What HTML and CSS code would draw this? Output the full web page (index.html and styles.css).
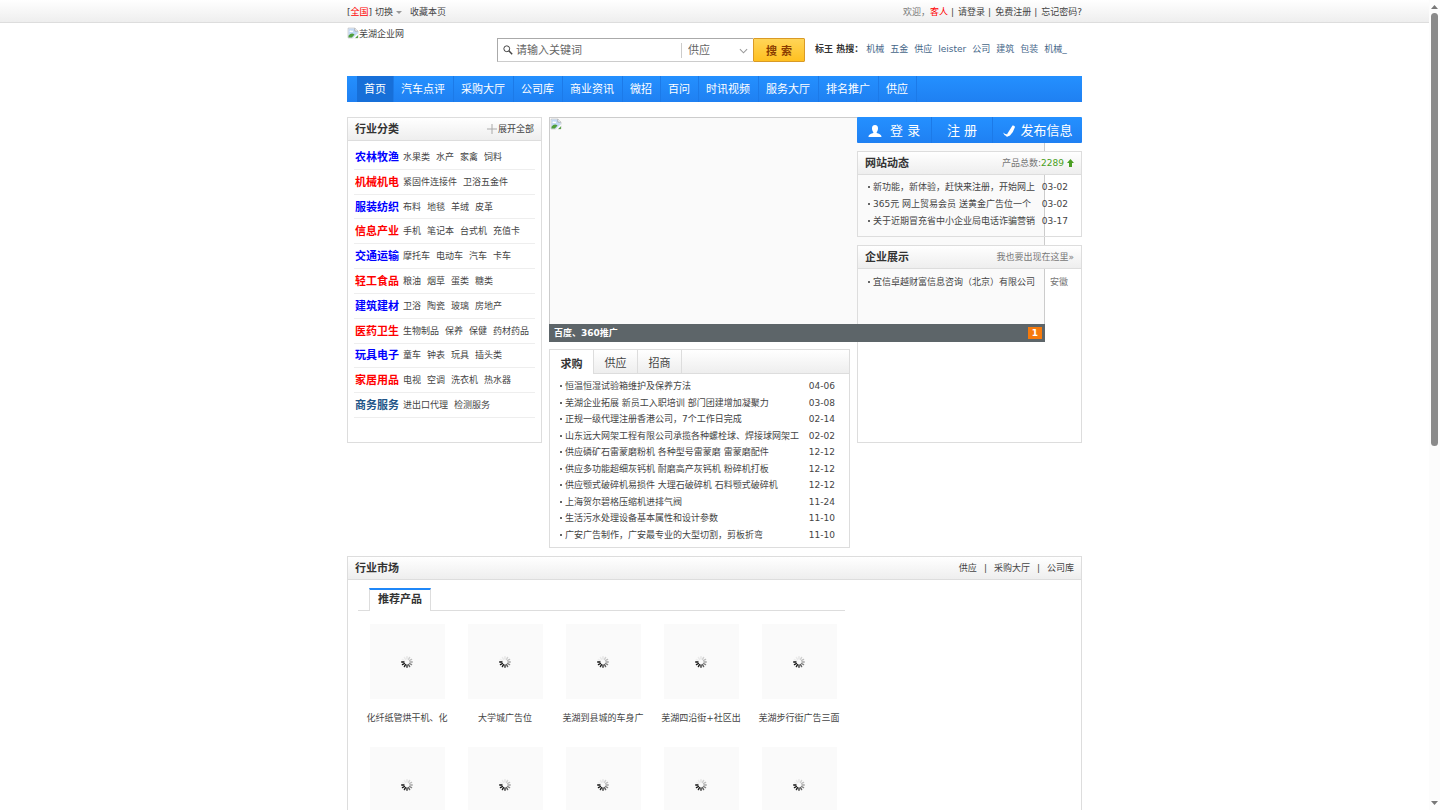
FILE: index.html
```html
<!DOCTYPE html>
<html lang="zh-CN">
<head>
<meta charset="utf-8">
<title>芜湖企业网</title>
<link rel="stylesheet" href="styles.css">
</head>
<body>
<svg class="sprites" aria-hidden="true">
  <symbol id="broken" viewBox="0 0 16 16">
    <path d="M1.500 1.500H10.500L14.500 5.500V14.500H1.500Z" fill="#fff" stroke="#b5b5b5"/>
    <path d="M2 2H10L14 6V9L9 14H2Z" fill="#c3d9f5"/>
    <path d="M3.500 6.500a1.500 1.500 0 0 1 2.500-1.500a1.500 1.500 0 0 1 2 1.500Z" fill="#fff"/>
    <path d="M2 14V11.500Q6 6.500 10 10L6.500 14Z" fill="#4f9e3a"/>
    <path d="M10.500 1.500V5.500H14.500" fill="#fff" stroke="#9a9a9a"/>
    <path d="M7 15.500L15.500 7.500V10L10 15.500Z" fill="#fff"/>
    <path d="M11 14.500H14.500V11Z" fill="#4f9e3a"/>
  </symbol>
  <symbol id="spinner" viewBox="-8 -8 16 16">
    <g stroke-width="1.900" stroke-linecap="round">
      <path d="M0-4V-7" stroke="#e4e4e4"/>
      <path d="M0-4V-7" stroke="#d2d2d2" transform="rotate(30)"/>
      <path d="M0-4V-7" stroke="#bcbcbc" transform="rotate(60)"/>
      <path d="M0-4V-7" stroke="#a4a4a4" transform="rotate(90)"/>
      <path d="M0-4V-7" stroke="#828282" transform="rotate(120)"/>
      <path d="M0-4V-7" stroke="#606060" transform="rotate(150)"/>
      <path d="M0-4V-7" stroke="#333" transform="rotate(180)"/>
      <path d="M0-4V-7" stroke="#222" transform="rotate(210)"/>
      <path d="M0-4V-7" stroke="#151515" transform="rotate(240)"/>
      <path d="M0-4V-7" stroke="#111" transform="rotate(270)"/>
      <path d="M0-4V-7" stroke="#eee" transform="rotate(300)"/>
      <path d="M0-4V-7" stroke="#eaeaea" transform="rotate(330)"/>
    </g>
  </symbol>
</svg>

<div class="page">
  <div class="topbar">
    <div class="wrap topbar-row">
      <div class="top-left">
        <span>[<a class="red" href="#">全国</a>]</span>
        <a href="#">切换</a>
        <i class="caret"></i>
        <a class="fav" href="#">收藏本页</a>
      </div>
      <div class="top-right">
        <span class="muted">欢迎，</span><span class="red">客人</span><i>|</i><a href="#">请登录</a><i>|</i><a href="#">免费注册</a><i>|</i><a href="#">忘记密码?</a>
      </div>
    </div>
  </div>

  <div class="wrap">
    <header class="header">
      <a class="logo" href="#"><svg class="broken"><use href="#broken"/></svg>芜湖企业网</a>
      <form class="search">
        <div class="search-box">
          <svg class="glass" viewBox="0 0 12 12"><circle cx="4.500" cy="4.500" r="3.500" fill="none" stroke="#444" stroke-width="1.200"/><path d="M7 7L11 11" stroke="#444" stroke-width="1.800"/></svg>
          <input class="search-input" type="text" placeholder="请输入关键词" aria-label="请输入关键词">
          <div class="search-type">
            <select aria-label="分类"><option>供应</option><option>公司</option></select>
            <svg class="chevron" viewBox="0 0 10 6"><path d="M1 1L5 5L9 1" fill="none" stroke="#999" stroke-width="1.200"/></svg>
          </div>
        </div>
        <button class="search-btn" type="button">搜 索</button>
      </form>
      <div class="hot"><b>标王 热搜：</b><a href="#">机械</a><a href="#">五金</a><a href="#">供应</a><a href="#">leister</a><a href="#">公司</a><a href="#">建筑</a><a href="#">包装</a><a href="#">机械_</a></div>
    </header>

    <nav class="nav">
      <a class="active" href="#">首页</a><a href="#">汽车点评</a><a href="#">采购大厅</a><a href="#">公司库</a><a href="#">商业资讯</a><a href="#">微招</a><a href="#">百问</a><a href="#">时讯视频</a><a href="#">服务大厅</a><a href="#">排名推广</a><a href="#">供应</a>
    </nav>

    <main class="columns">
      <section class="panel cats">
        <div class="panel-head"><h2>行业分类</h2><a class="expand" href="#"><svg viewBox="0 0 10 10"><path d="M5 0V10M0 5H10" stroke="#aaa"/></svg>展开全部</a></div>
        <ul class="cat-list">
          <li><a class="cat blue" href="#">农林牧渔</a><a href="#">水果类</a><a href="#">水产</a><a href="#">家禽</a><a href="#">饲料</a></li>
          <li><a class="cat red" href="#">机械机电</a><a href="#">紧固件连接件</a><a href="#">卫浴五金件</a></li>
          <li><a class="cat blue" href="#">服装纺织</a><a href="#">布料</a><a href="#">地毯</a><a href="#">羊绒</a><a href="#">皮革</a></li>
          <li><a class="cat red" href="#">信息产业</a><a href="#">手机</a><a href="#">笔记本</a><a href="#">台式机</a><a href="#">充值卡</a></li>
          <li><a class="cat blue" href="#">交通运输</a><a href="#">摩托车</a><a href="#">电动车</a><a href="#">汽车</a><a href="#">卡车</a></li>
          <li><a class="cat red" href="#">轻工食品</a><a href="#">粮油</a><a href="#">烟草</a><a href="#">蛋类</a><a href="#">糖类</a></li>
          <li><a class="cat blue" href="#">建筑建材</a><a href="#">卫浴</a><a href="#">陶瓷</a><a href="#">玻璃</a><a href="#">房地产</a></li>
          <li><a class="cat red" href="#">医药卫生</a><a href="#">生物制品</a><a href="#">保养</a><a href="#">保健</a><a href="#">药材药品</a></li>
          <li><a class="cat blue" href="#">玩具电子</a><a href="#">童车</a><a href="#">钟表</a><a href="#">玩具</a><a href="#">插头类</a></li>
          <li><a class="cat red" href="#">家居用品</a><a href="#">电视</a><a href="#">空调</a><a href="#">洗衣机</a><a href="#">热水器</a></li>
          <li><a class="cat navy" href="#">商务服务</a><a href="#">进出口代理</a><a href="#">检测服务</a></li>
        </ul>
      </section>

      <div class="middle">
        <div class="slider">
          <svg class="broken"><use href="#broken"/></svg>
          <div class="slider-bar"><b>百度、360推广</b><span class="page-no">1</span></div>
        </div>
        <section class="panel">
          <div class="tabs">
            <button class="tab on" type="button">求购</button><button class="tab" type="button">供应</button><button class="tab" type="button">招商</button>
          </div>
          <ul class="list trade">
            <li><a href="#">恒温恒湿试验箱维护及保养方法</a><span>04-06</span></li>
            <li><a href="#">芜湖企业拓展 新员工入职培训 部门团建增加凝聚力</a><span>03-08</span></li>
            <li><a href="#">正规一级代理注册香港公司，7个工作日完成</a><span>02-14</span></li>
            <li><a href="#">山东远大网架工程有限公司承揽各种螺栓球、焊接球网架工</a><span>02-02</span></li>
            <li><a href="#">供应磷矿石雷蒙磨粉机 各种型号雷蒙磨 雷蒙磨配件</a><span>12-12</span></li>
            <li><a href="#">供应多功能超细灰钙机 耐磨高产灰钙机 粉碎机打板</a><span>12-12</span></li>
            <li><a href="#">供应颚式破碎机易损件 大理石破碎机 石料颚式破碎机</a><span>12-12</span></li>
            <li><a href="#">上海贺尔碧格压缩机进排气阀</a><span>11-24</span></li>
            <li><a href="#">生活污水处理设备基本属性和设计参数</a><span>11-10</span></li>
            <li><a href="#">广安广告制作，广安最专业的大型切割，剪板折弯</a><span>11-10</span></li>
          </ul>
        </section>
      </div>

      <aside class="side">
        <div class="actions">
          <a class="act-login" href="#"><svg viewBox="0 0 14 12"><path d="M7 0C9.200 0 10 1.600 10 3.400C10 5 9.400 6.200 8.700 6.900V8C10.500 8.800 13.500 9 13.500 12H.5C.5 9 3.500 8.800 5.300 8V6.900C4.600 6.200 4 5 4 3.400C4 1.600 4.800 0 7 0Z" fill="#fff"/></svg>登 录</a>
          <a class="act-reg" href="#">注 册</a>
          <a class="act-post" href="#"><svg viewBox="0 0 14 12"><path d="M10.500 .5Q12.500 0 13 2Q11.500 7 8 10.500L4.500 12L5.500 8.500Z" fill="#fff"/><path d="M1 7.500Q2 10.500 5 11.500L6 9.500Q3 9.500 1 7.500Z" fill="#fff"/></svg>发布信息</a>
        </div>
        <section class="panel">
          <div class="panel-head"><h2>网站动态</h2><span class="count">产品总数:<b>2289</b><svg viewBox="0 0 7 8"><path d="M3.500 0L7 4H5V8H2V4H0Z" fill="#4a9f22"/></svg></span></div>
          <ul class="list news">
            <li><a href="#">新功能，新体验，赶快来注册，开始网上</a><span>03-02</span></li>
            <li><a href="#">365元 网上贸易会员 送黄金广告位一个</a><span>03-02</span></li>
            <li><a href="#">关于近期冒充省中小企业局电话诈骗营销</a><span>03-17</span></li>
          </ul>
        </section>
        <section class="panel show">
          <div class="panel-head"><h2>企业展示</h2><a class="muted" href="#">我也要出现在这里»</a></div>
          <ul class="list firms">
            <li><a href="#">宜信卓越财富信息咨询（北京）有限公司</a><span>安徽</span></li>
          </ul>
        </section>
      </aside>
    </main>

    <section class="panel market">
      <div class="panel-head"><h2>行业市场</h2><div class="links"><a href="#">供应</a><i>|</i><a href="#">采购大厅</a><i>|</i><a href="#">公司库</a></div></div>
      <div class="goods">
        <div class="goods-head"><h3>推荐产品</h3></div>
        <div class="grid">
          <a class="item" href="#"><span class="thumb"><svg><use href="#spinner"/></svg></span>化纤纸管烘干机、化</a>
          <a class="item" href="#"><span class="thumb"><svg><use href="#spinner"/></svg></span>大学城广告位</a>
          <a class="item" href="#"><span class="thumb"><svg><use href="#spinner"/></svg></span>芜湖到县城的车身广</a>
          <a class="item" href="#"><span class="thumb"><svg><use href="#spinner"/></svg></span>芜湖四沿街+社区出</a>
          <a class="item" href="#"><span class="thumb"><svg><use href="#spinner"/></svg></span>芜湖步行街广告三面</a>
          <a class="item" href="#"><span class="thumb"><svg><use href="#spinner"/></svg></span></a>
          <a class="item" href="#"><span class="thumb"><svg><use href="#spinner"/></svg></span></a>
          <a class="item" href="#"><span class="thumb"><svg><use href="#spinner"/></svg></span></a>
          <a class="item" href="#"><span class="thumb"><svg><use href="#spinner"/></svg></span></a>
          <a class="item" href="#"><span class="thumb"><svg><use href="#spinner"/></svg></span></a>
        </div>
      </div>
    </section>
  </div>
</div>

<div class="scrollbar" aria-hidden="true">
  <svg viewBox="0 0 7 4"><path d="M3.500 0L7 4H0Z" fill="#777"/></svg>
  <div class="track"><div class="thumb-bar"></div></div>
  <svg viewBox="0 0 7 4"><path d="M0 0H7L3.500 4Z" fill="#777"/></svg>
</div>
</body>
</html>
```

FILE: styles.css
```css
* { box-sizing: border-box; }
body {
  margin: 0;
  height: 100vh;
  overflow: hidden;
  display: flex;
  background: #fff;
  color: #444;
  font: 9px/16px "DejaVu Sans", "Noto Sans CJK SC", sans-serif;
}
a { color: inherit; text-decoration: none; }
ul { list-style: none; margin: 0; padding: 0; }
h2, h3 { margin: 0; padding-top: 2px; font-size: 11px; line-height: 16px; color: #333; }
i { font-style: normal; }
button, input, select { font-family: inherit; }
.sprites { position: absolute; width: 0; height: 0; }
.red { color: #f00; }
.blue { color: #00f; }
.navy { color: #225588; }
.muted { color: #777; }

.page { flex: 1; min-width: 0; height: 100vh; overflow: hidden; }
.wrap { max-width: 735px; margin: 0 auto; }

.topbar {
  border-bottom: 1px solid #ddd;
  background: linear-gradient(#fff, #eee);
}
.topbar-row { display: flex; justify-content: space-between; padding: 4px 0 2px; }
.top-left { display: flex; align-items: center; gap: 3px; }
.caret { border: 3px solid transparent; border-top-color: #999; border-bottom: 0; }
.fav { margin-left: 5px; }
.top-right i { margin: 0 4px 0 3px; }

.header { display: flex; align-items: flex-start; height: 53px; }
.logo { display: flex; width: 150px; padding-top: 3px; }
.broken { width: 12px; height: 12px; display: block; }
.logo .broken { margin-top: 1px; }
.search { display: flex; width: 308px; margin-top: 15px; }
.search-box {
  flex: 1;
  min-width: 0;
  height: 24px;
  display: flex;
  align-items: center;
  padding-left: 5px;
  border: 1px solid #aaa;
  border-right: 0;
  border-bottom-color: #ccc;
}
.glass { width: 10px; height: 10px; }
.search-input {
  flex: 1;
  min-width: 0;
  border: 0;
  outline: 0;
  padding: 1px 0 0 3px;
  font-size: 11px;
  color: #666;
}
.search-input::placeholder { color: #666; opacity: 1; }
.search-type { position: relative; width: 72px; border-left: 1px solid #ccc; }
.search-type select {
  appearance: none;
  display: block;
  width: 100%;
  padding: 1px 0 0 6px;
  border: 0;
  background: none;
  font-size: 11px;
  line-height: 14px;
  color: #666;
}
.chevron { position: absolute; right: 5px; top: 5px; width: 9px; height: 6px; pointer-events: none; }
.search-btn {
  width: 52px;
  height: 24px;
  padding: 0;
  border: 1px solid #d99a26;
  border-radius: 1px;
  background: linear-gradient(#ffd558, #ffc020);
  color: #8a3c00;
  font-size: 11px;
  font-weight: bold;
}
.hot { margin: 18px 0 0 10px; white-space: nowrap; color: #446688; }
.hot b { margin-right: 3px; color: #333; }
.hot a { margin-right: 6px; }

.nav {
  display: flex;
  height: 26px;
  padding-left: 10px;
  background: linear-gradient(#2490ff, #1f80f2);
  color: #fff;
  font-size: 11px;
  line-height: 24px;
  white-space: nowrap;
}
.nav a { padding: 2px 8px 0 7px; border-right: 1px solid #1c7ae8; }
.nav .active { padding: 2px 7px 0; background: #176fd8; }

.columns {
  display: grid;
  grid-template-columns: 195px minmax(0, 1fr) 225px;
  gap: 7px;
  align-items: start;
  margin-top: 15px;
}
.panel { border: 1px solid #ddd; }
.panel-head {
  display: flex;
  align-items: center;
  justify-content: space-between;
  height: 23px;
  padding: 0 7px;
  border-bottom: 1px solid #ddd;
  background: linear-gradient(#fff, #eee);
}
.expand { display: flex; align-items: center; gap: 1px; }
.expand svg { width: 10px; height: 10px; }
.cats { height: 326px; }
.cat-list {
  display: grid;
  grid-auto-rows: 1fr;
  height: 273px;
  margin: 4px 6px 0;
}
.cat-list li {
  display: flex;
  align-items: center;
  gap: 6px;
  padding-left: 1px;
  border-bottom: 1px solid #eee;
  white-space: nowrap;
}
.cat { width: 42px; padding-top: 2px; font-size: 11px; font-weight: bold; }

.middle { display: grid; grid-template-columns: minmax(0, 1fr); gap: 7px; }
.slider {
  position: relative;
  width: 496px;
  height: 225px;
  border: 1px solid #ccc;
  background: #fafafa;
}
.slider-bar {
  position: absolute;
  z-index: 2;
  left: -1px;
  right: -1px;
  bottom: -1px;
  display: flex;
  align-items: center;
  justify-content: space-between;
  height: 18px;
  padding: 0 3px 0 5px;
  background: #5d6569;
  color: #fff;
}
.page-no { width: 14px; background: #f67a0c; text-align: center; line-height: 12px; font-weight: bold; }

.tabs { display: flex; height: 24px; border-bottom: 1px solid #ddd; background: linear-gradient(#fff, #eee); }
.tab {
  width: 44px;
  height: 23px;
  padding: 1px 0 0;
  border: 0;
  border-right: 1px solid #ddd;
  background: none;
  font-size: 11px;
  color: #444;
}
.tab.on { height: 24px; background: #fff; font-weight: bold; color: #333; }

.list { display: grid; grid-auto-rows: 1fr; }
.list li {
  display: flex;
  align-items: center;
  gap: 3px;
  white-space: nowrap;
  min-height: 0;
}
.list li::before { content: ""; width: 2px; height: 2px; flex: none; background: #666; }
.list span { margin-left: auto; }
.trade { height: 165px; margin: 4px 14px 4px 10px; }
.news { height: 50px; margin: 4px 13px 7px 10px; }
.firms { height: 16px; margin: 5px 13px 7px 10px; }
.firms span { color: #777; }

.side { position: relative; z-index: 1; display: grid; gap: 8px; }
.actions {
  display: flex;
  height: 26px;
  background: linear-gradient(#2490ff, #1f80f2);
  border-radius: 1px;
  color: #fff;
  font-size: 13px;
  white-space: nowrap;
}
.actions a { display: flex; align-items: center; justify-content: center; gap: 8px; padding-top: 2px; border-right: 1px solid #1c7ae8; }
.actions svg { width: 14px; height: 12px; }
.actions .act-login { flex: 75; }
.actions .act-reg { flex: 60; }
.actions .act-post { flex: 90; border: 0; gap: 4px; }
.count { display: flex; align-items: center; color: #777; }
.count b { font-weight: normal; color: #4a9f22; }
.count svg { width: 7px; height: 8px; margin-left: 3px; }
.show { height: 198px; }

.market { margin-top: 8px; }
.links i { margin: 0 7px; }
.goods { width: 490px; margin: 8px 0 0 10px; }
.goods-head { height: 23px; margin-right: 3px; padding-left: 11px; border-bottom: 1px solid #ddd; }
.goods-head h3 {
  width: 62px;
  height: 23px;
  border: 1px solid #ddd;
  border-top: 2px solid #1f87f8;
  border-bottom: 0;
  background: #fff;
  text-align: center;
}
.grid { display: grid; grid-template-columns: repeat(5, 1fr); grid-auto-rows: 123px; margin-top: 13px; }
.item { display: flex; flex-direction: column; align-items: center; gap: 11px; white-space: nowrap; }
.thumb { display: grid; place-items: center; width: 75px; height: 75px; background: #fafafa; }
.thumb svg { width: 12px; height: 12px; }

.scrollbar {
  width: 11px;
  height: 100vh;
  display: flex;
  flex-direction: column;
  align-items: center;
  padding: 5px 0;
  background: #fcfcfc;
}
.scrollbar svg { width: 7px; height: 4px; }
.track { flex: 1; padding-top: 4px; }
.thumb-bar { width: 7px; height: 55%; border-radius: 4px; background: #8a8a8a; }
```
